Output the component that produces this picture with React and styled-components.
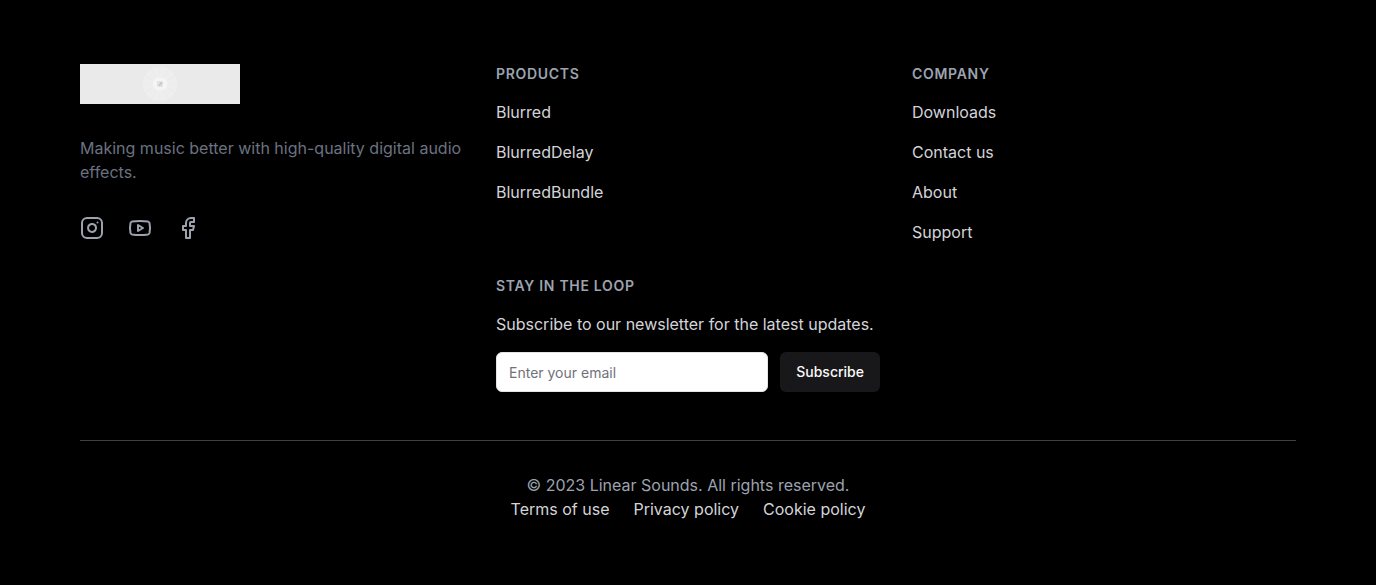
import React from "react";
import styled, { createGlobalStyle } from "styled-components";
import { Instagram, Youtube, Facebook } from "lucide-react";

const GlobalStyle = createGlobalStyle`
  *, *::before, *::after { box-sizing: border-box; }
  body {
    margin: 0;
    background: #000;
    font-family: Inter, "Liberation Sans", sans-serif;
    font-size: 16px;
    line-height: 24px;
    font-optical-sizing: none;
  }
  h2, p, ul { margin: 0; padding: 0; }
  ul { list-style: none; }
`;

const Footer = styled.footer`
  padding: 64px 80px;
  background: #000;
  color: #d4d4d8;
`;

const Columns = styled.div`
  display: grid;
  grid-template-columns: repeat(3, minmax(0, 1fr));
  gap: 32px;
  @media (max-width: 900px) { grid-template-columns: minmax(0, 1fr); }
`;

const Brand = styled.div`
  display: flex;
  flex-direction: column;
  align-items: flex-start;
  gap: 32px;
`;

const LogoLink = styled.a`
  display: block;
  height: 40px;
`;

const LogoArt = styled.svg`
  display: block;
`;

const Tagline = styled.p`
  color: #6b7280;
`;

const Socials = styled.div`
  display: flex;
  gap: 24px;
`;

const SocialLink = styled.a`
  display: block;
  height: 24px;
  color: #9ca3af;
  svg { display: block; }
`;

const LinkColumns = styled.div`
  grid-column: span 2;
  display: grid;
  grid-template-columns: repeat(2, minmax(0, 1fr));
  gap: 32px;
  @media (max-width: 900px) { grid-column: auto; }
`;

const Section = styled.section`
  display: flex;
  flex-direction: column;
  gap: 16px;
`;

const Heading = styled.h2`
  font-size: 14px;
  line-height: 20px;
  font-weight: 600;
  letter-spacing: 0.05em;
  text-transform: uppercase;
  color: #9ca3af;
`;

const LinkList = styled.ul`
  display: flex;
  flex-direction: column;
  gap: 16px;
`;

const TextLink = styled.a`
  display: block;
  color: #d4d4d8;
  text-decoration: none;
  &:hover { color: #fff; }
`;

const Form = styled.form`
  display: flex;
  gap: 12px;
`;

const EmailField = styled.input`
  flex: 1;
  min-width: 0;
  height: 40px;
  padding: 8px 12px;
  border: 1px solid #e4e4e7;
  border-radius: 6px;
  background: #fff;
  color: #18181b;
  font: 400 14px/20px Inter, "Liberation Sans", sans-serif;
  &::placeholder { color: #71717a; opacity: 1; }
`;

const SubmitButton = styled.button`
  height: 40px;
  padding: 8px 16px;
  border: 0;
  border-radius: 6px;
  background: #18181b;
  color: #fafafa;
  font: 500 14px/20px Inter, "Liberation Sans", sans-serif;
  cursor: pointer;
`;

const Bottom = styled.div`
  margin-top: 48px;
  padding-top: 32px;
  border-top: 1px solid #3f3f46;
  text-align: center;
`;

const Copyright = styled.p`
  color: #9ca3af;
`;

const LegalLinks = styled.nav`
  display: flex;
  flex-wrap: wrap;
  justify-content: center;
  column-gap: 24px;
`;

function Logo() {
  const spokes = Array.from({ length: 12 }, (_, i) => i * 30);
  return (
    <LogoArt width="160" height="40" viewBox="0 0 160 40" role="img" aria-label="Linear Sounds">
      <rect width="160" height="40" fill="#eaeaea" />
      <circle cx="80" cy="20" r="17.500" fill="#eeeeee" />
      {spokes.map((angle) => (
        <path key={angle} d="M80 11V2" stroke="#e9e9e9" strokeWidth="0.6" transform={`rotate(${angle} 80 20)`} />
      ))}
      <rect x="73" y="14" width="14" height="12" rx="5" fill="#f5f5f5" />
      <rect x="77" y="17" width="6" height="6" rx="1" fill="#e2e2e2" />
      <path d="M79 21.500l3-3" stroke="#c2c2c2" strokeWidth="1.500" />
    </LogoArt>
  );
}

const socials = [
  { label: "Instagram", Icon: Instagram },
  { label: "YouTube", Icon: Youtube },
  { label: "Facebook", Icon: Facebook },
];

const groups = [
  { title: "Products", links: ["Blurred", "BlurredDelay", "BlurredBundle"] },
  { title: "Company", links: ["Downloads", "Contact us", "About", "Support"] },
];

const legal = ["Terms of use", "Privacy policy", "Cookie policy"];

export default function App() {
  return (
    <>
      <GlobalStyle />
      <Footer>
        <Columns>
          <Brand>
            <LogoLink href="#"><Logo /></LogoLink>
            <Tagline>Making music better with high-quality digital audio effects.</Tagline>
            <Socials>
              {socials.map(({ label, Icon }) => (
                <SocialLink key={label} href="#" aria-label={label}>
                  <Icon size={24} />
                </SocialLink>
              ))}
            </Socials>
          </Brand>
          <LinkColumns>
            {groups.map(({ title, links }) => (
              <Section key={title}>
                <Heading>{title}</Heading>
                <LinkList>
                  {links.map((text) => (
                    <li key={text}><TextLink href="#">{text}</TextLink></li>
                  ))}
                </LinkList>
              </Section>
            ))}
            <Section>
              <Heading>Stay in the loop</Heading>
              <p>Subscribe to our newsletter for the latest updates.</p>
              <Form onSubmit={(event) => event.preventDefault()}>
                <EmailField type="email" aria-label="Email address" placeholder="Enter your email" />
                <SubmitButton type="submit">Subscribe</SubmitButton>
              </Form>
            </Section>
          </LinkColumns>
        </Columns>
        <Bottom>
          <Copyright>© 2023 Linear Sounds. All rights reserved.</Copyright>
          <LegalLinks aria-label="Legal">
            {legal.map((text) => (
              <TextLink key={text} href="#">{text}</TextLink>
            ))}
          </LegalLinks>
        </Bottom>
      </Footer>
    </>
  );
}
